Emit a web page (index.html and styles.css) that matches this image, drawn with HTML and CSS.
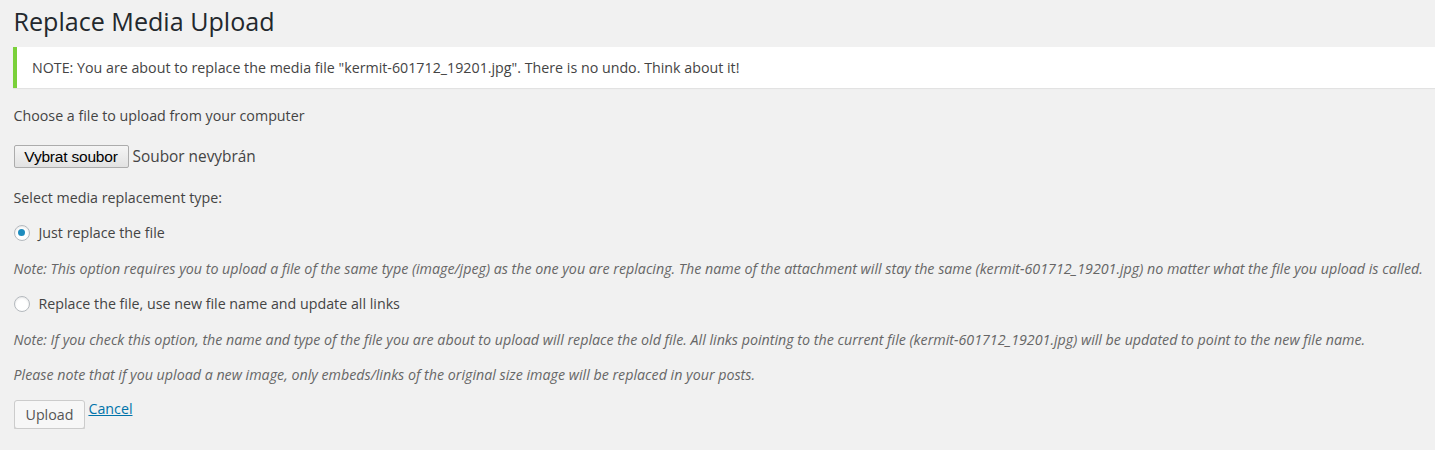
FILE: index.html
```html
<!DOCTYPE html>
<html lang="en">
<head>
    <meta charset="UTF-8">
    <meta name="viewport" content="width=device-width, initial-scale=1.0">
    <title>Replace Media Upload</title>
    <link rel="stylesheet" href="styles.css">
</head>
<body>
    <div class="wrap">
        <h1>Replace Media Upload</h1>

        <div class="notice">
            <p>NOTE: You are about to replace the media file "kermit-601712_19201.jpg". There is no undo. Think about it!</p>
        </div>

        <form id="replaceForm">
            <p>Choose a file to upload from your computer</p>

            <div class="file-row">
                <button type="button" class="file-btn">Vybrat soubor</button>
                <span class="file-name">Soubor nevybrán</span>
            </div>

            <p>Select media replacement type:</p>

            <label class="radio-row">
                <input type="radio" name="replace_type" value="replace" checked>
                <span>Just replace the file</span>
            </label>
            <p class="howto">Note: This option requires you to upload a file of the same type (image/jpeg) as the one you are replacing. The name of the attachment will stay the same (kermit-601712_19201.jpg) no matter what the file you upload is called.</p>

            <label class="radio-row">
                <input type="radio" name="replace_type" value="replace_and_search">
                <span>Replace the file, use new file name and update all links</span>
            </label>
            <p class="howto">Note: If you check this option, the name and type of the file you are about to upload will replace the old file. All links pointing to the current file (kermit-601712_19201.jpg) will be updated to point to the new file name.</p>

            <p class="howto">Please note that if you upload a new image, only embeds/links of the original size image will be replaced in your posts.</p>

            <div class="actions">
                <button type="submit" class="button">Upload</button>
                <a href="#" class="cancel">Cancel</a>
            </div>
        </form>
    </div>
</body>
</html>
```

FILE: styles.css
```css
html, body {
    margin: 0;
    padding: 0;
    background: #f1f1f1;
}
body {
    font-family: "Open Sans", sans-serif;
    font-size: 14.25px;
    line-height: 21px;
    color: #444;
}
.wrap {
    padding-left: 13px;
}
h1 {
    margin: 0;
    padding: 5px 0 0 0.5px;
    font-size: 25.1px;
    line-height: 32px;
    font-weight: 400;
    color: #23282d;
}
.notice {
    margin-top: 10px;
    padding: 10px 15px;
    background: #fff;
    border-left: 4px solid #7ad03a;
    box-shadow: 0 1px 1px rgba(0, 0, 0, 0.06);
}
.notice p {
    margin: 0;
}
form {
    padding: 17px 0 0 0.5px;
}
form p {
    margin: 0 0 14px;
}
.file-row {
    display: flex;
    align-items: center;
    gap: 4px;
    margin: 19px 0 19px;
}
.file-btn {
    height: 23px;
    width: 115px;
    padding: 0;
    font-family: "Liberation Sans", Arial, sans-serif;
    font-size: 15.5px;
    letter-spacing: -0.2px;
    color: #000;
    background: linear-gradient(#f5f5f5, #e2e2e2);
    border: 1px solid #acacac;
    border-radius: 2px;
}
.file-name {
    font-size: 15.4px;
}
.radio-row {
    display: flex;
    align-items: center;
    gap: 9px;
    margin-bottom: 15px;
}
.radio-row input {
    appearance: none;
    width: 16px;
    height: 16px;
    margin: 0;
    border: 1px solid #b4b9be;
    border-radius: 50%;
    background: #fff;
    box-shadow: inset 0 1px 2px rgba(0, 0, 0, 0.1);
    display: flex;
    align-items: center;
    justify-content: center;
}
.radio-row input:checked::before {
    content: "";
    width: 7px;
    height: 7px;
    border-radius: 50%;
    background: #1e8cbe;
}
.howto {
    font-style: italic;
    color: #666;
}
.actions {
    display: flex;
    align-items: flex-start;
    gap: 3px;
    margin-top: 15px;
}
.button {
    height: 29px;
    padding: 0 11px 1px;
    font-family: "Open Sans", sans-serif;
    font-size: 14.25px;
    color: #555;
    background: #f7f7f7;
    border: 1px solid #ccc;
    border-radius: 3px;
    box-shadow: 0 1px 0 #ccc;
}
.cancel {
    color: #0073aa;
    margin-top: -2px;
}
```
